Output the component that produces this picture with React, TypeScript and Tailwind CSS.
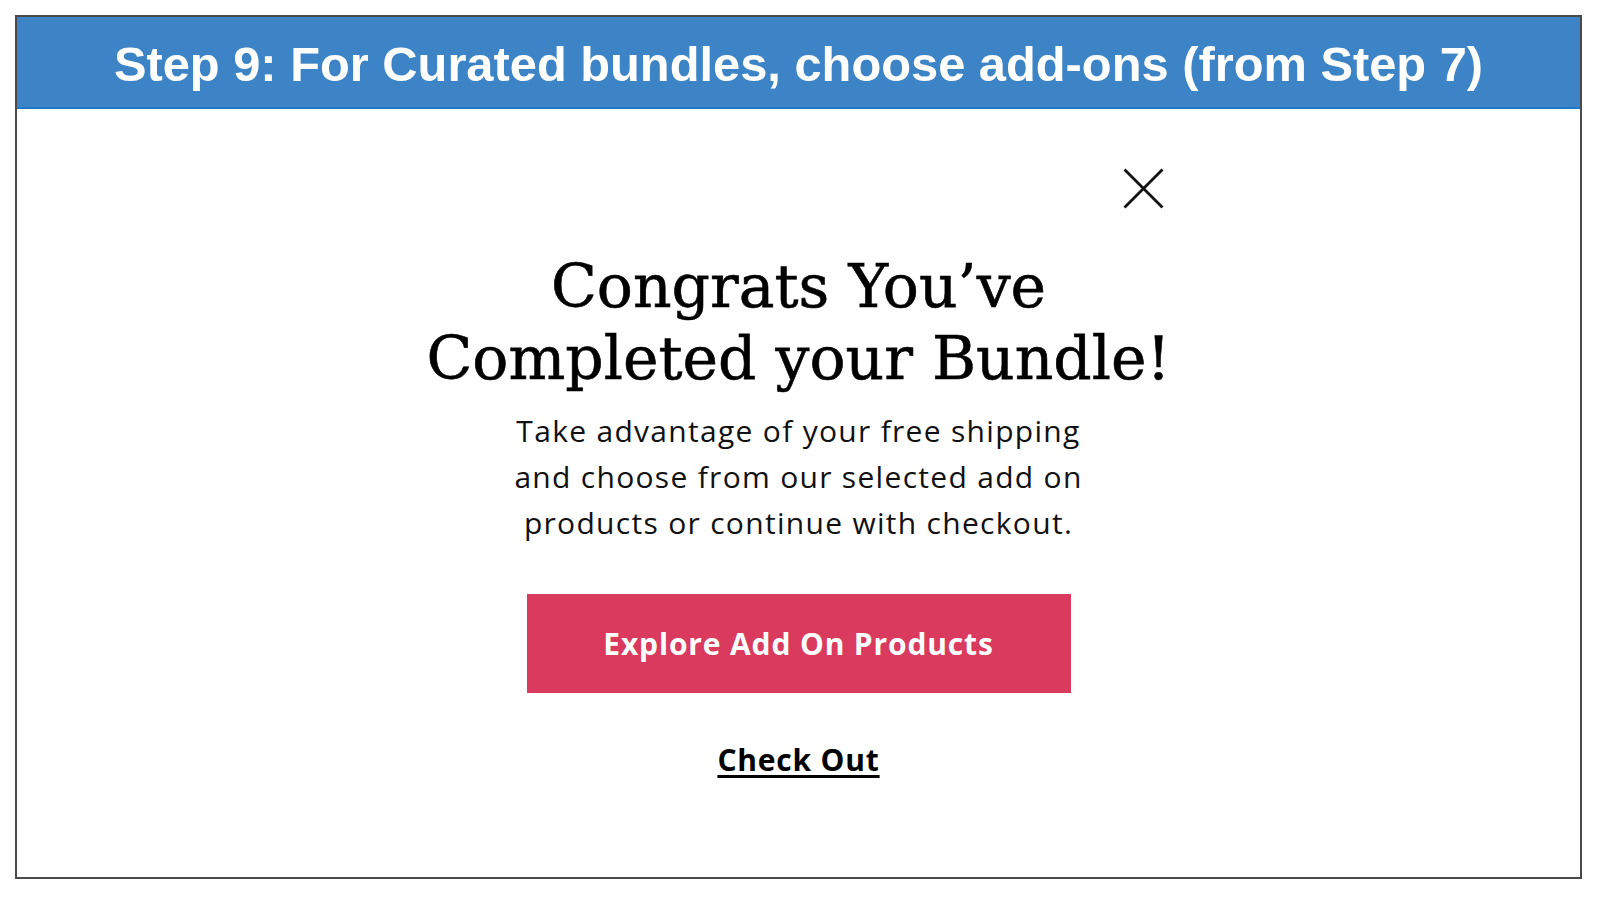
import React from "react";

export default function App() {
  return (
    <div className="w-[1600px] h-[900px] bg-white pt-[15px] pl-[15px]">
      <div className="w-[1567px] h-[864px] border-2 border-[#4a4a4a] flex flex-col bg-white">
        <div className="h-[92px] bg-[#3d84c6] border-b-2 border-[#1f78c9] flex items-center justify-center pt-[5px]">
          <h1
            className="text-white font-bold text-[48.8px] leading-none"
            style={{ fontFamily: '"Liberation Sans", Arial, sans-serif' }}
          >
            Step 9: For Curated bundles, choose add-ons (from Step 7)
          </h1>
        </div>
        <div className="flex-1 flex justify-center pt-[59px]">
          <div className="w-[730px] flex flex-col items-center">
            <div className="w-full flex justify-end">
              <button className="w-[41px] h-[41px] flex items-center justify-center" aria-label="Close">
                <svg width="41" height="41" viewBox="0 0 41 41" fill="none">
                  <path d="M1.5 1.5 L39.5 39.5 M39.5 1.5 L1.5 39.5" stroke="#111" strokeWidth="2.8" strokeLinecap="butt" />
                </svg>
              </button>
            </div>
            <h2
              className="mt-[41px] text-center text-black text-[60px] leading-[72px] whitespace-nowrap [-webkit-text-stroke:0.6px_black]"
              style={{ fontFamily: '"DejaVu Serif", serif' }}
            >
              Congrats You’ve
              <br />
              Completed your Bundle!
            </h2>
            <p
              className="mt-[14px] text-center text-[#111] text-[30px] leading-[46px] tracking-[1.3px] whitespace-nowrap"
              style={{ fontFamily: '"Open Sans", sans-serif' }}
            >
              Take advantage of your free shipping
              <br />
              and choose from our selected add on
              <br />
              products or continue with checkout.
            </p>
            <button
              className="mt-[48px] w-[544px] h-[99px] bg-[#d93a5e] text-white font-bold text-[30px] tracking-[0.85px] flex items-center justify-center"
              style={{ fontFamily: '"Open Sans", sans-serif' }}
            >
              Explore Add On Products
            </button>
            <a
              href="#"
              className="mt-[49px] text-black font-bold text-[30px] leading-[36px] tracking-[0.8px] underline underline-offset-[4px] decoration-[2.5px]"
              style={{ fontFamily: '"Open Sans", sans-serif' }}
            >
              Check Out
            </a>
          </div>
        </div>
      </div>
    </div>
  );
}
